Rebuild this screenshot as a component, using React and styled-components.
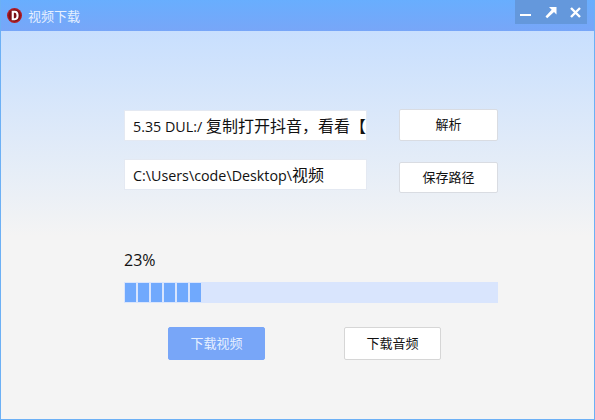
import styled, { createGlobalStyle } from 'styled-components'

const GlobalStyle = createGlobalStyle`
  html, body {
    margin: 0;
    padding: 0;
    background: #f4f4f4;
  }
  * {
    box-sizing: border-box;
  }
`

const Window = styled.div`
  width: 595px;
  height: 420px;
  display: flex;
  flex-direction: column;
  border: 1px solid #6cb0f5;
  border-top: 0;
  overflow: hidden;
  font-family: "Open Sans", "Noto Sans CJK SC", sans-serif;
  color: #111;
`

const TitleBar = styled.div`
  height: 31px;
  margin: 0 -1px;
  flex-shrink: 0;
  display: flex;
  align-items: flex-start;
  justify-content: space-between;
  padding-left: 7px;
  background: linear-gradient(to bottom, #68aefe, #78a6f8);
`

const TitleLeft = styled.div`
  display: flex;
  align-items: center;
  gap: 6px;
  height: 30px;
`

const TitleText = styled.span`
  font-size: 13px;
  color: #e6f0ff;
`

const WinButtons = styled.div`
  width: 72px;
  height: 24px;
  margin-right: 8px;
  display: flex;
  align-items: center;
  justify-content: space-between;
  padding: 0 6px 0 5px;
  background: #6498dc;
`

const Content = styled.div`
  flex: 1;
  padding: 78px 96px 0 123px;
  background: linear-gradient(to bottom, #c8dffe 0, #f4f4f4 205px);
`

const FormGrid = styled.div`
  display: grid;
  grid-template-columns: 243px 99px;
  column-gap: 32px;
  row-gap: 18px;
`

const PathField = styled.div`
  height: 31px;
  padding: 0 0 0 8px;
  margin-top: ${(p) => p.$top ?? 1}px;
  background: #fff;
  border: 1px solid #e4e9f2;
  font-size: 16px;
  line-height: 30px;
  white-space: nowrap;
  overflow: hidden;
`

const Latin = styled.span`
  font-size: 14.3px;
`

const SideButton = styled.button`
  height: ${(p) => p.$h}px;
  margin-top: ${(p) => p.$top || 0}px;
  padding: 0 0 3px;
  background: #fff;
  border: 1px solid #d9dce2;
  border-radius: 2px;
  font-family: inherit;
  font-size: 13px;
  color: #111;
`

const Percent = styled.div`
  margin-top: 55px;
  height: 24px;
  font-size: 16px;
  line-height: 24px;
`

const Track = styled.div`
  margin-top: 10px;
  width: 374px;
  height: 21px;
  padding: 1px;
  display: flex;
  gap: 2px;
  background: #d9e5fd;
`

const Segment = styled.div`
  width: 11px;
  background: #70a9fd;
`

const Actions = styled.div`
  margin-top: 24px;
  padding-left: 44px;
  display: flex;
  gap: 79px;
`

const ActionButton = styled.button`
  width: 97px;
  height: 33px;
  padding: 0 0 2px;
  border-radius: 2px;
  border: 1px solid ${(p) => (p.$primary ? '#78a6f8' : '#d6d6d6')};
  background: ${(p) => (p.$primary ? '#78a6f8' : '#fff')};
  color: ${(p) => (p.$primary ? '#e6f0ff' : '#111')};
  font-family: inherit;
  font-size: 13px;
`

function Logo() {
  return (
    <svg width="15" height="15" viewBox="0 0 16 16">
      <circle cx="8" cy="8" r="8" fill="#b01c24" />
      <circle cx="8" cy="8" r="6.500" fill="#7c1016" />
      <path d="M5 3h3.400c2.600 0 4 2 4 5s-1.400 5-4 5H5zM7.300 5v6h1c1.200 0 1.800-1.200 1.800-3S9.500 5 8.300 5z" fill="#fff" fillRule="evenodd" />
    </svg>
  )
}

function Minimize() {
  return (
    <svg width="11" height="12" viewBox="0 0 11 12">
      <rect x="0" y="8" width="11" height="2" fill="#fff" />
    </svg>
  )
}

function Restore() {
  return (
    <svg width="13" height="13" viewBox="0 0 13 13">
      <path d="M5 1h7.500v7.500l-2.500-2.500-6.800 6.200-1.700-1.700 6.200-6.800z" fill="#fff" />
    </svg>
  )
}

function Close() {
  return (
    <svg width="11" height="11" viewBox="0 0 11 11">
      <path d="M1 1l9 9M10 1l-9 9" stroke="#fff" strokeWidth="2.400" />
    </svg>
  )
}

const segments = [0, 1, 2, 3, 4, 5]

function App() {
  return (
    <>
      <GlobalStyle />
      <Window>
        <TitleBar>
          <TitleLeft>
            <Logo />
            <TitleText>视频下载</TitleText>
          </TitleLeft>
          <WinButtons>
            <Minimize />
            <Restore />
            <Close />
          </WinButtons>
        </TitleBar>
        <Content>
          <FormGrid>
            <PathField><Latin>5.35 DUL:/ </Latin>复制打开抖音，看看【</PathField>
            <SideButton $h={32}>解析</SideButton>
            <PathField $top={0}><Latin>C:\Users\code\Desktop\</Latin>视频</PathField>
            <SideButton $h={31} $top={3}>保存路径</SideButton>
          </FormGrid>
          <Percent>23%</Percent>
          <Track>
            {segments.map((n) => (
              <Segment key={n} />
            ))}
          </Track>
          <Actions>
            <ActionButton $primary>下载视频</ActionButton>
            <ActionButton>下载音频</ActionButton>
          </Actions>
        </Content>
      </Window>
    </>
  )
}

export default App
